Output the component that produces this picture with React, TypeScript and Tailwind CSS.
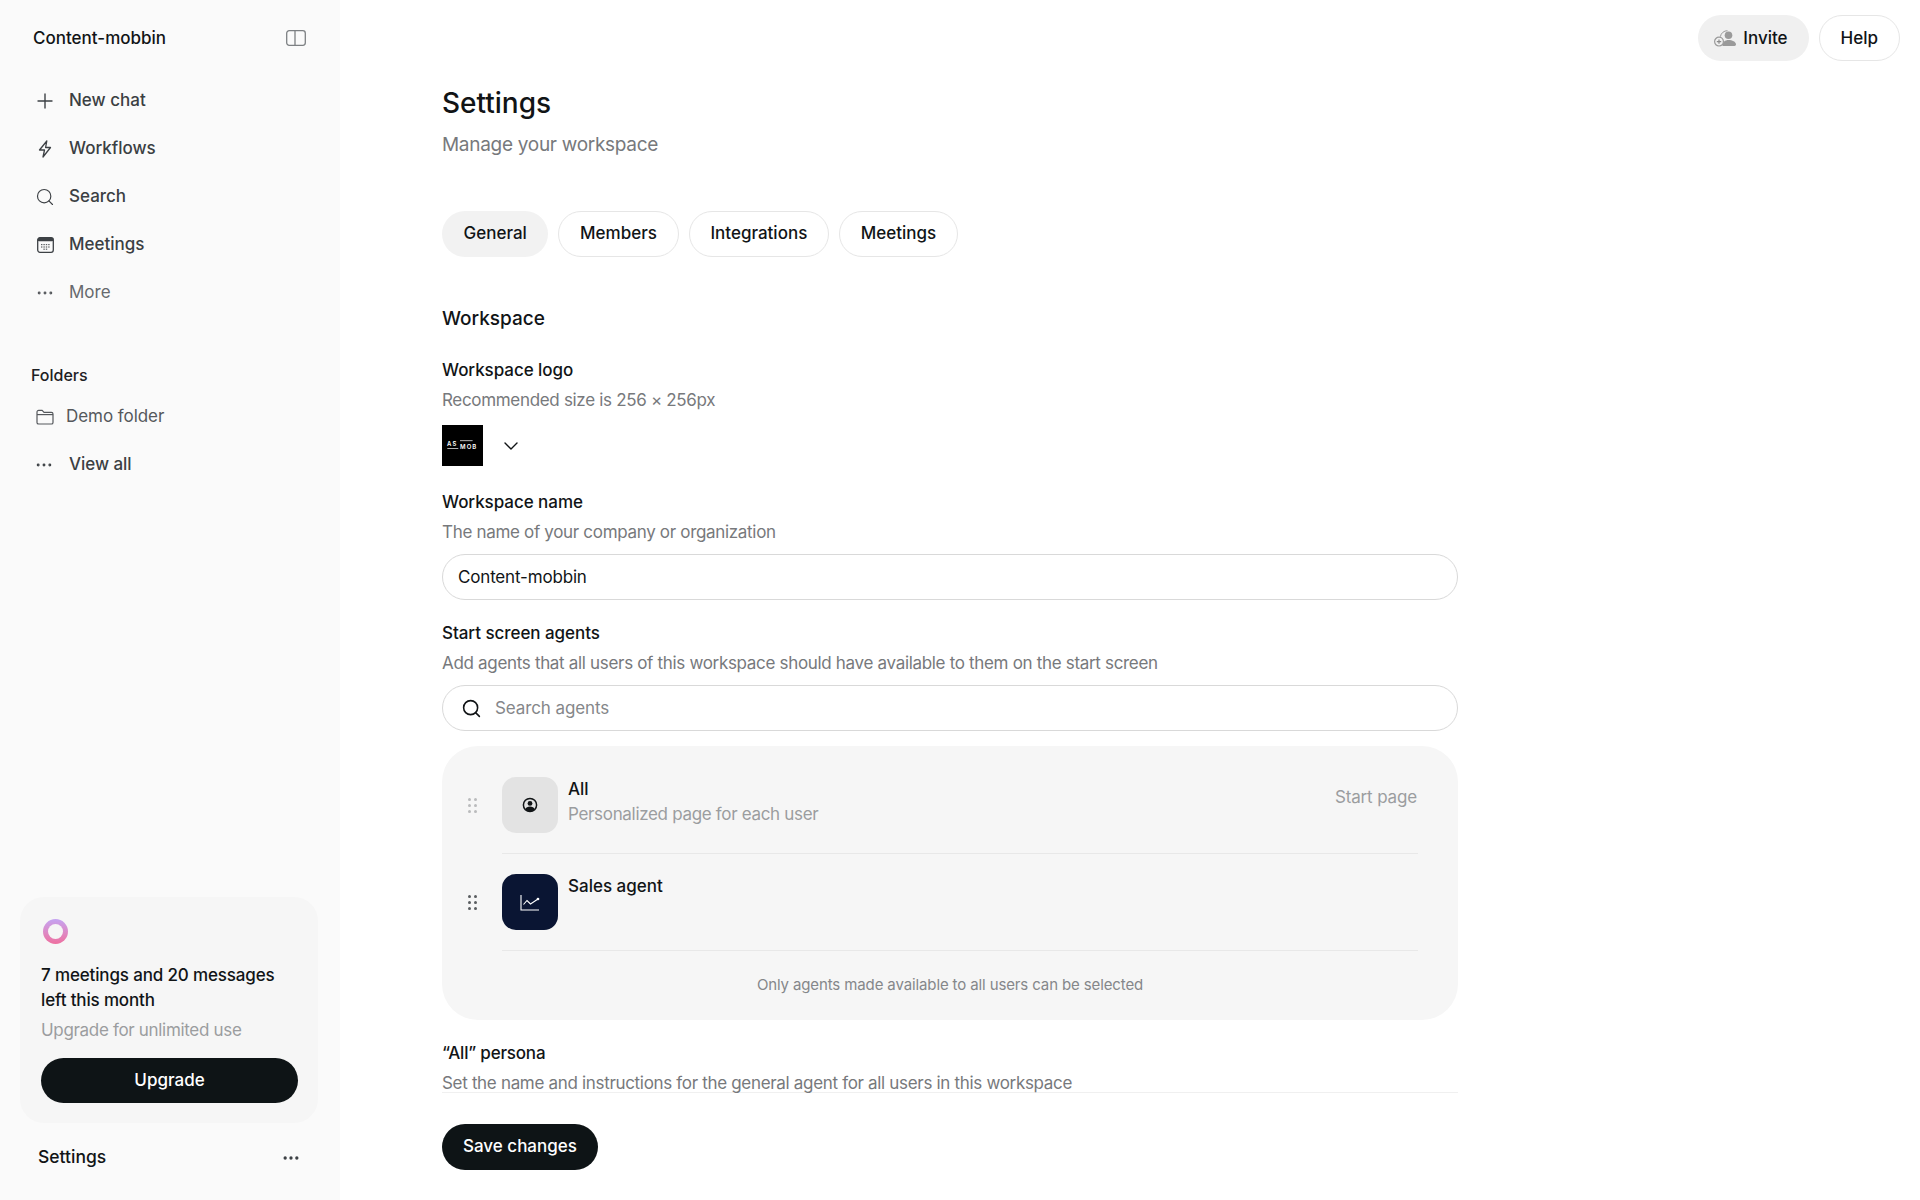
import { Plus, Search, MoreHorizontal, ChevronDown } from "lucide-react";

function PanelIcon() {
  return (
    <svg width="20" height="16" viewBox="0 0 20 16" fill="none" stroke="#7d8083" strokeWidth="1.3">
      <rect x="0.7" y="0.7" width="18.6" height="14.6" rx="2.5" />
      <line x1="9" y1="0.7" x2="9" y2="15.3" />
    </svg>
  );
}

function BoltIcon() {
  return (
    <svg width="14" height="18" viewBox="0 0 14 18" fill="none" stroke="#3d4145" strokeWidth="1.3" strokeLinejoin="round">
      <path d="M8.8 1 1.5 10h5L5 17l7.5-9.5H7.6L8.8 1Z" />
    </svg>
  );
}

function CalendarIcon() {
  return (
    <svg width="17" height="16" viewBox="0 0 17 16" fill="none">
      <rect x="0.7" y="0.7" width="15.6" height="14.6" rx="2.2" stroke="#3d4145" strokeWidth="1.3" />
      <rect x="0.7" y="0.7" width="15.6" height="3.6" rx="1.5" fill="#3d4145" />
      <g fill="#5b5f63">
        <rect x="4" y="7" width="1.4" height="1.2" />
        <rect x="6.4" y="7" width="1.4" height="1.2" />
        <rect x="8.8" y="7" width="1.4" height="1.2" />
        <rect x="11.2" y="7" width="1.4" height="1.2" />
        <rect x="4" y="9.4" width="1.4" height="1.2" />
        <rect x="6.4" y="9.4" width="1.4" height="1.2" />
        <rect x="8.8" y="9.4" width="1.4" height="1.2" />
        <rect x="11.2" y="9.4" width="1.4" height="1.2" />
        <rect x="6.4" y="11.6" width="1.4" height="1.2" />
        <rect x="8.8" y="11.6" width="1.4" height="1.2" />
      </g>
    </svg>
  );
}

function FolderIcon() {
  return (
    <svg width="18" height="16" viewBox="0 0 18 16" fill="none" stroke="#55585c" strokeWidth="1.2" strokeLinejoin="round">
      <path d="M1 3a1.6 1.6 0 0 1 1.6-1.6h3.6L8 3.4h7.4A1.6 1.6 0 0 1 17 5v8.4a1.6 1.6 0 0 1-1.6 1.6H2.6A1.6 1.6 0 0 1 1 13.4V3Z" />
      <path d="M1 5.6h16" />
    </svg>
  );
}

function InviteIcon() {
  return (
    <svg width="23" height="17" viewBox="0 0 23 17" fill="none">
      <circle cx="14.5" cy="5.2" r="3.8" fill="#9a9a9a" />
      <path d="M8.5 16c0-4 2.4-6 6-6s7.5 1.7 7.5 4.6c0 .9-.6 1.4-1.5 1.4h-12Z" fill="#9a9a9a" />
      <path d="M6.4 6.6A7 7 0 0 1 13.5 0.7" stroke="#9a9a9a" strokeWidth="1" />
      <circle cx="5" cy="11.6" r="4.4" fill="#f0f0f0" stroke="#9a9a9a" strokeWidth="1.2" />
      <path d="M5 9.4v4.4M2.8 11.6h4.4" stroke="#8a8a8a" strokeWidth="1.2" />
    </svg>
  );
}

function DragDots({ faded }: { faded?: boolean }) {
  return (
    <div className={`grid grid-cols-2 gap-x-[3px] gap-y-[3px] ${faded ? "opacity-30" : "opacity-80"}`}>
      {[0, 1, 2, 3, 4, 5].map((i) => (
        <span key={i} className="size-[3px] rounded-full bg-[#33373b]" />
      ))}
    </div>
  );
}

function NavRow({ icon, label, muted }: { icon: React.ReactNode; label: string; muted?: boolean }) {
  return (
    <div className="flex h-12 items-center pl-[33px]">
      <div className="flex w-6 justify-center">{icon}</div>
      <span className={`ml-3 text-[17px] ${muted ? "text-[#66696d]" : "font-[450] text-[#3b3f43]"}`}>{label}</span>
    </div>
  );
}

function Tab({ label, active }: { label: string; active?: boolean }) {
  return (
    <div
      className={`flex h-[46px] items-center rounded-full text-[17px] font-medium text-[#111416] ${
        active ? "bg-[#f2f2f2] px-[21.5px]" : "border border-[#e6e6e6] bg-white px-[20.75px]"
      }`}
    >
      {label}
    </div>
  );
}

function Label({ children }: { children: React.ReactNode }) {
  return <div className="text-[17px] leading-[26px] font-medium tracking-[-0.05px] text-[#111416]">{children}</div>;
}

function Hint({ children }: { children: React.ReactNode }) {
  return <div className="mt-1 text-[17px] leading-[26px] tracking-[-0.32px] text-[#77797c]">{children}</div>;
}

export default function App() {
  return (
    <div className="flex h-[1200px] w-full overflow-hidden bg-white font-['Inter',sans-serif]">
      <aside className="flex w-[340px] shrink-0 flex-col bg-[#fafafa]">
        <div className="flex h-[76px] items-center justify-between pr-[34px] pl-[33px]">
          <span className="pt-[1px] text-[17px] font-medium text-[#111416]">Content-mobbin</span>
          <PanelIcon />
        </div>
        <div className="mt-[1px]">
          <NavRow icon={<Plus size={24} strokeWidth={1.4} color="#3d4145" />} label="New chat" />
          <NavRow icon={<BoltIcon />} label="Workflows" />
          <NavRow icon={<Search size={20} strokeWidth={1.4} color="#3d4145" />} label="Search" />
          <NavRow icon={<CalendarIcon />} label="Meetings" />
          <NavRow icon={<MoreHorizontal size={20} strokeWidth={1.5} color="#55585c" />} label="More" muted />
        </div>
        <div className="mt-[46px] pl-[31px] text-[16px] leading-6 font-medium text-[#1d2023]">Folders</div>
        <div className="mt-[6px] flex h-12 items-center pl-[36px]">
          <FolderIcon />
          <span className="ml-[12px] text-[17px] tracking-[-0.05px] text-[#55585c]">Demo folder</span>
        </div>
        <div className="flex h-12 items-center pl-[32px]">
          <div className="flex w-6 justify-center">
            <MoreHorizontal size={20} strokeWidth={1.5} color="#3d4145" />
          </div>
          <span className="ml-[13px] text-[17px] font-[450] tracking-[-0.05px] text-[#3b3f43]">View all</span>
        </div>

        <div className="mt-auto mr-[22px] ml-5 flex h-[226px] flex-col rounded-[24px] bg-[#f6f6f6] pt-[22px] pr-[20px] pl-[21px]">
          <div className="ml-[2px] size-[25px] rounded-full bg-gradient-to-b from-[#c4a3f2] to-[#ee6f9f] p-[5px]">
            <div className="size-full rounded-full bg-[#f6f6f6]" />
          </div>
          <div className="mt-[19px] text-[17px] leading-[25px] font-medium tracking-[-0.15px] text-[#111416]">
            7 meetings and 20 messages
            <br />
            left this month
          </div>
          <div className="mt-[5px] text-[17px] leading-[25px] tracking-[-0.32px] text-[#9b9d9f]">Upgrade for unlimited use</div>
          <div className="mt-[15px] flex h-[45px] items-center justify-center rounded-full bg-[#0e1416] pt-[1px] text-[17px] font-medium text-white">
            Upgrade
          </div>
        </div>
        <div className="flex h-[77px] items-center justify-between pr-[39px] pb-[8px] pl-[38px]">
          <span className="text-[17.5px] font-medium text-[#111416]">Settings</span>
          <MoreHorizontal size={20} strokeWidth={2} color="#3d4145" />
        </div>
      </aside>

      <main className="relative min-w-0 flex-1 pl-[102px]">
        <div className="absolute top-[15px] right-[20px] flex gap-[10px]">
          <div className="flex h-[46px] items-center gap-[6px] rounded-full bg-[#f0f0f0] pt-[1px] pr-[21px] pl-[16px] text-[17px] font-medium text-[#111416]">
            <InviteIcon />
            Invite
          </div>
          <div className="flex h-[46px] items-center rounded-full border border-[#e6e6e6] px-[21px] pt-[1px] text-[17px] font-medium text-[#111416]">
            Help
          </div>
        </div>

        <div className="w-[1016px]">
          <h1 className="pt-[84px] text-[28px] leading-[38px] font-medium text-[#111416]">Settings</h1>
          <p className="mt-[8px] text-[19px] leading-[30px] tracking-[-0.29px] text-[#77797c]">Manage your workspace</p>

          <div className="mt-[51px] flex gap-[10px]">
            <Tab label="General" active />
            <Tab label="Members" />
            <Tab label="Integrations" />
            <Tab label="Meetings" />
          </div>

          <h2 className="mt-[46px] text-[19px] leading-[32px] font-medium text-[#111416]">Workspace</h2>

          <div className="mt-[22px]">
            <Label>Workspace logo</Label>
            <Hint>Recommended size is 256 × 256px</Hint>
            <div className="mt-[12px] flex items-center gap-[16px]">
              <div className="size-[41px] bg-black">
                <svg width="41" height="41" viewBox="0 0 41 41" fill="#fff">
                  <text x="5" y="20.6" fontSize="6" fontWeight="600" letterSpacing="1.2">AS</text>
                  <rect x="5.3" y="23" width="11" height="0.7" />
                  <rect x="18" y="15.4" width="12.6" height="0.7" />
                  <text x="18" y="23.8" fontSize="6" fontWeight="600" letterSpacing="1.1">MOB</text>
                </svg>
              </div>
              <ChevronDown size={24} strokeWidth={1.4} color="#111416" />
            </div>
          </div>

          <div className="mt-[23px]">
            <Label>Workspace name</Label>
            <Hint>The name of your company or organization</Hint>
            <div className="mt-[9px] flex h-[46px] items-center rounded-full border border-[#d9d9d9] pt-[2px] pl-[15px] text-[17px] tracking-[-0.17px] text-[#111416]">
              Content-mobbin
            </div>
          </div>

          <div className="mt-[20px]">
            <Label>Start screen agents</Label>
            <Hint>Add agents that all users of this workspace should have available to them on the start screen</Hint>
            <div className="mt-[9px] flex h-[46px] items-center gap-[13px] rounded-full border border-[#d9d9d9] pl-[18px] text-[17px] tracking-[-0.1px] text-[#85878a]">
              <Search size={21} strokeWidth={1.8} color="#111416" />
              <span className="pt-[1px]">Search agents</span>
            </div>
          </div>

          <div className="mt-[15px] h-[274px] rounded-[36px] bg-[#f6f6f6] pt-[31px] pr-10 pl-[24px]">
            <div className="flex">
              <div className="flex h-[56px] w-9 items-center pl-[2px]">
                <DragDots faded />
              </div>
              <div className="flex-1">
                <div className="flex gap-[10px] border-b border-[#e8e8e8] pb-[20px]">
                  <div className="flex size-[56px] items-center justify-center rounded-[14px] bg-[#e3e3e3]">
                    <svg width="16" height="16" viewBox="0 0 16 16">
                      <circle cx="8" cy="8" r="6.6" fill="none" stroke="#111416" strokeWidth="1.5" />
                      <circle cx="8" cy="6.4" r="2.4" fill="#111416" />
                      <path d="M3.2 12.6c.8-2.2 2.6-3 4.8-3s4 .8 4.8 3A6.6 6.6 0 0 1 8 14.6a6.6 6.6 0 0 1-4.8-2Z" fill="#111416" />
                    </svg>
                  </div>
                  <div className="flex-1">
                    <div className="text-[17px] leading-[25px] font-medium text-[#111416]">All</div>
                    <div className="text-[17px] leading-[25px] tracking-[-0.32px] text-[#9b9d9f]">Personalized page for each user</div>
                  </div>
                  <div className="mt-[8px] mr-[1px] text-[17px] leading-[25px] tracking-[-0.15px] text-[#9b9d9f]">Start page</div>
                </div>
              </div>
            </div>
            <div className="mt-[20px] flex">
              <div className="flex h-[56px] w-9 items-center pl-[2px]">
                <DragDots />
              </div>
              <div className="flex-1">
                <div className="flex gap-[10px] border-b border-[#e8e8e8] pb-[20px]">
                  <div className="flex size-[56px] items-center justify-center rounded-[14px] bg-[#0a1533]">
                    <svg width="20" height="17" viewBox="0 0 20 17" fill="none" stroke="#fff" strokeWidth="1.1">
                      <path d="M1 1v15h18" />
                      <path d="M3.5 10.5 7 6.5l3.5 3.5L18 5" />
                      <circle cx="18" cy="5" r="0.8" fill="#fff" />
                    </svg>
                  </div>
                  <div className="text-[17px] leading-[25px] font-medium text-[#111416]">Sales agent</div>
                </div>
              </div>
            </div>
            <div className="mt-[24px] pl-[16px] text-center text-[15px] leading-5 tracking-[-0.12px] text-[#85878a]">
              Only agents made available to all users can be selected
            </div>
          </div>

          <div className="mt-[20px]">
            <Label>
              <span className="tracking-[-0.2px]">“All” persona</span>
            </Label>
            <div className="h-[23px] border-b border-[#f0f0f0]">
              <Hint>Set the name and instructions for the general agent for all users in this workspace</Hint>
            </div>
          </div>

          <div className="mt-[31px] inline-flex h-[46px] items-center rounded-full bg-[#0e1416] px-[21px] text-[17px] font-medium text-white">
            Save changes
          </div>
        </div>
      </main>
    </div>
  );
}
